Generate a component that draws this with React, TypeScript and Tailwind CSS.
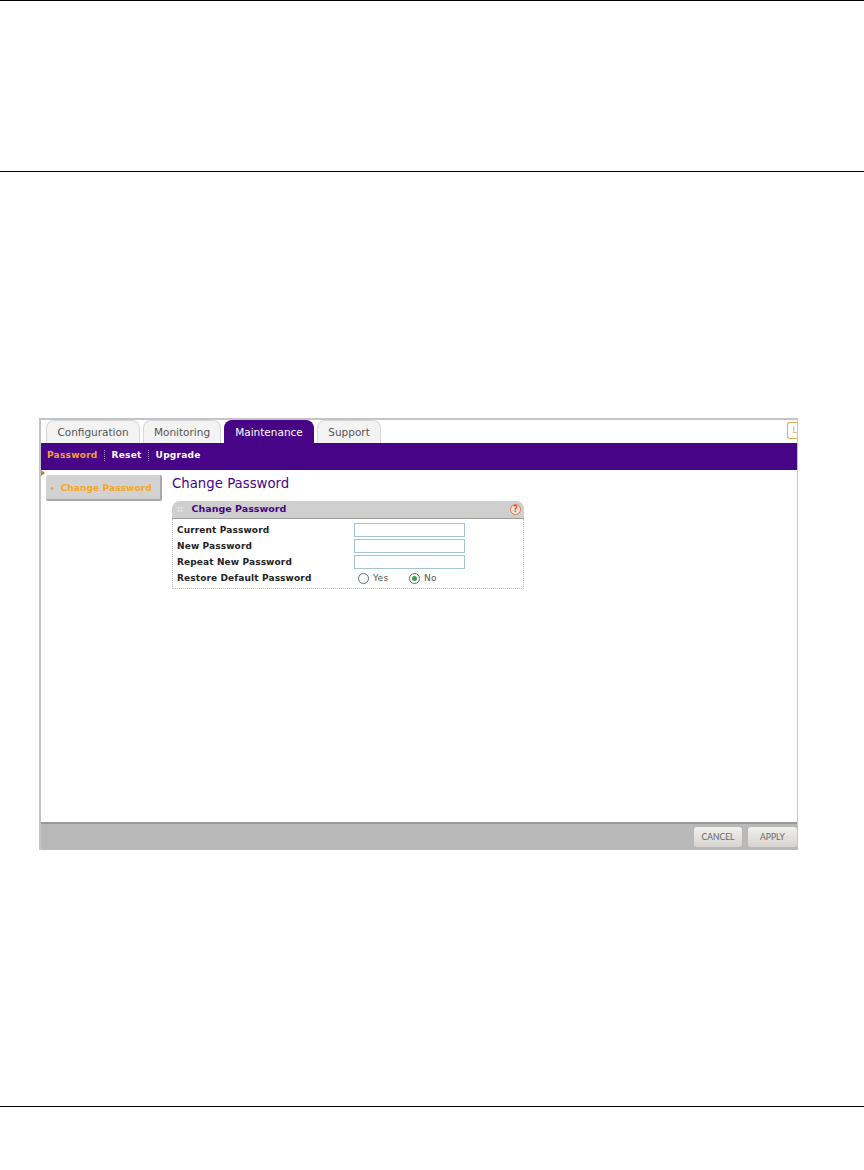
import { useState } from "react";

const font = "font-['DejaVu_Sans',sans-serif]";

function Tab({ label, active, w }: { label: string; active?: boolean; w: string }) {
	return (
		<div
			className={`${w} flex h-[23px] items-center justify-center rounded-t-[8px] border-x border-t pt-[2px] text-[10.5px] ${
				active ? "border-[#470487] bg-[#470487] text-white" : "border-[#d8d8d8] bg-[#f3f3f3] text-[#555555]"
			}`}
		>
			{label}
		</div>
	);
}

function Row({ label, children }: { label: string; children: React.ReactNode }) {
	return (
		<div className="flex h-4 items-center">
			<div className="w-[177px] pt-[2px] text-[9px] font-bold tracking-[0.12px] text-[#222222]">{label}</div>
			{children}
		</div>
	);
}

function Field() {
	return <input type="text" className="h-[14px] w-[111px] border border-[#a3c4d6] bg-white outline-none" />;
}

function Radio({ label, checked, w }: { label: string; checked?: boolean; w: string }) {
	return (
		<div className={`${w} flex items-center gap-1 text-[9px] tracking-[0.3px] text-[#555555]`}>
			<span className="flex size-[11px] items-center justify-center rounded-full border border-[#5a6a80] bg-white">
				{checked && <span className="size-[5px] rounded-full bg-[#3f9e4d]" />}
			</span>
			<span className="pt-px">{label}</span>
		</div>
	);
}

export default function App() {
	const [current, setCurrent] = useState("Password");

	return (
		<div className={`flex h-[1170px] w-[864px] flex-col bg-white ${font}`}>
			<div className="h-[172px] border-y border-black" />

			<div className="mt-[246px] ml-[39px] flex h-[432px] w-[759px] flex-col border-t-2 border-r border-l-2 border-[#c4c4c4] bg-white">
				{/* TABS */}
				<div className="flex h-[23px] items-end justify-between pl-[5px]">
					<div className="flex gap-[3px]">
						<Tab label="Configuration" w="w-[94px]" />
						<Tab label="Monitoring" w="w-[78px]" />
						<Tab label="Maintenance" active w="w-[90px]" />
						<Tab label="Support" w="w-[64px]" />
					</div>
					<div className="mb-[4px] flex h-[17px] w-[10px] items-center justify-end overflow-hidden rounded-l-[3px] border-y border-l border-[#e0ac50] bg-white text-[8px] text-[#e0ac50]">
						L
					</div>
				</div>

				{/* SUB NAV */}
				<div className="flex h-[27px] items-center gap-[6.5px] bg-[#470487] pb-[2px] pl-[6px] text-[9px] font-bold tracking-[0.25px] text-white">
					{["Password", "Reset", "Upgrade"].map((item, i) => (
						<div key={item} className="flex items-center gap-[6.5px]">
							{i > 0 && <span className="h-[11px] border-l border-dotted border-[#a98ac8]" />}
							<button
								type="button"
								onClick={() => setCurrent(item)}
								className={current === item ? "font-bold text-[#f7a32c]" : "font-bold text-white"}
							>
								{item}
							</button>
						</div>
					))}
				</div>

				{/* CONTENT */}
				<div className="relative flex flex-1 pl-[5px]">
					<span className="absolute top-0 left-0 border-y-[3px] border-l-[4px] border-y-transparent border-l-[#b08a30]" />

					<div className="w-[126px] pt-[5px]">
						<div className="flex h-[26px] w-[116px] items-center gap-[6px] rounded-[2px] border-r-2 border-b-2 border-[#a8a8a8] bg-[#d2d2d2] pt-[3px] pl-[5px] text-[9px] font-bold tracking-[0.1px] text-[#f5a623]">
							<span className="text-[7px]">▸</span>
							Change Password
						</div>
					</div>

					<div className="flex flex-col pt-[5px]">
						<h1 className="text-[13.3px] leading-[18px] text-[#470487]">Change Password</h1>

						<div className="mt-[8px] w-[352px]">
							<div className="flex h-[18px] items-center justify-between rounded-t-[8px] border-b border-[#9a9a9a] bg-[#cfcfcf] pr-[3px] pl-[5px]">
								<div className="flex items-center gap-[9px] text-[9.5px] font-bold text-[#470487]">
									<span className="text-[8px] text-[#eeeeee]">∷</span>
									Change Password
								</div>
								<span className="flex size-[11px] items-center justify-center rounded-full border border-[#e8744a] bg-[#f8e4d8] text-[8px] font-bold text-[#d9541e]">
									?
								</span>
							</div>

							<div className="h-[70px] border-x border-b border-dotted border-[#c0c0c0] pt-[3px] pl-[4px]">
								<Row label="Current Password">
									<Field />
								</Row>
								<Row label="New Password">
									<Field />
								</Row>
								<Row label="Repeat New Password">
									<Field />
								</Row>
								<Row label="Restore Default Password">
									<div className="flex pl-[4px]">
										<Radio label="Yes" w="w-[51px]" />
										<Radio label="No" checked w="w-[40px]" />
									</div>
								</Row>
							</div>
						</div>
					</div>
				</div>

				{/* FOOTER */}
				<div className="flex h-[28px] items-center justify-end gap-[6px] border-t-2 border-[#989898] bg-[#b9b9b9]">
					<button
						type="button"
						className="h-[20px] w-[48px] rounded-[3px] bg-linear-to-b from-[#f2f0ec] to-[#d6d4d0] font-['Lato',sans-serif] text-[8.5px] text-[#666666]"
					>
						CANCEL
					</button>
					<button
						type="button"
						className="h-[20px] w-[49px] rounded-[3px] bg-linear-to-b from-[#f2f0ec] to-[#d6d4d0] font-['Lato',sans-serif] text-[8.5px] text-[#666666]"
					>
						APPLY
					</button>
				</div>
			</div>

			<div className="mt-[256px] border-t border-black" />
		</div>
	);
}
